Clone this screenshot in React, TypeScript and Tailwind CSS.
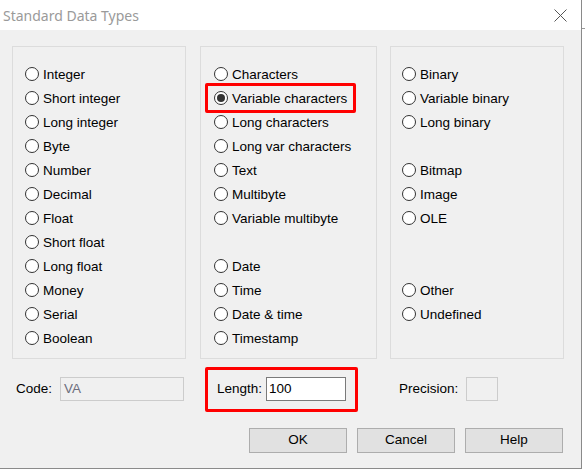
import React from "react";

type Item = { label: string; checked?: boolean; mark?: boolean } | null;

const col1: Item[] = [
  { label: "Integer" },
  { label: "Short integer" },
  { label: "Long integer" },
  { label: "Byte" },
  { label: "Number" },
  { label: "Decimal" },
  { label: "Float" },
  { label: "Short float" },
  { label: "Long float" },
  { label: "Money" },
  { label: "Serial" },
  { label: "Boolean" },
];

const col2: Item[] = [
  { label: "Characters" },
  { label: "Variable characters", checked: true, mark: true },
  { label: "Long characters" },
  { label: "Long var characters" },
  { label: "Text" },
  { label: "Multibyte" },
  { label: "Variable multibyte" },
  null,
  { label: "Date" },
  { label: "Time" },
  { label: "Date & time" },
  { label: "Timestamp" },
];

const col3: Item[] = [
  { label: "Binary" },
  { label: "Variable binary" },
  { label: "Long binary" },
  null,
  { label: "Bitmap" },
  { label: "Image" },
  { label: "OLE" },
  null,
  null,
  { label: "Other" },
  { label: "Undefined" },
];

function Radio({ item }: { item: Item }) {
  if (!item) return <div className="h-[24px]" />;
  return (
    <div className="relative flex items-center h-[24px]">
      {item.mark && (
        <div className="absolute left-[-9px] top-[-3px] w-[151px] h-[30px] border-[3px] border-[#ff0000] rounded-[2px]" />
      )}
      <span className="w-[14px] h-[14px] rounded-full border border-[#333333] bg-white flex items-center justify-center shrink-0">
        {item.checked && <span className="w-[8px] h-[8px] rounded-full bg-[#333333]" />}
      </span>
      <span className="ml-[4px] whitespace-nowrap leading-[16px] pt-[1px]">{item.label}</span>
    </div>
  );
}

function Group({ items, w, pl }: { items: Item[]; w: string; pl: string }) {
  return (
    <div className={`${w} ${pl} h-[313px] border border-[#dcdcdc] pt-[15px] flex flex-col`}>
      {items.map((it, i) => (
        <Radio key={i} item={it} />
      ))}
    </div>
  );
}

export default function App() {
  return (
    <div
      className="w-[585px] h-[473px] bg-white flex text-[13.5px] text-black overflow-hidden"
      style={{ fontFamily: '"Liberation Sans", Arial, sans-serif' }}
    >
      <div className="w-[582px] h-[469px] flex flex-col border-r border-b border-[#8a8a8a]">
        <div className="h-[30px] bg-white flex items-center justify-between shrink-0">
          <span
            className="ml-[3px] text-[14px] text-[#9a9a9a]"
            style={{ fontFamily: '"Noto Sans", "Open Sans", sans-serif' }}
          >
            Standard Data Types
          </span>
          <svg width="13" height="13" viewBox="0 0 13 13" className="mr-[14px]">
            <path d="M0.5 0.5 L12.5 12.5 M12.5 0.5 L0.5 12.5" stroke="#555" strokeWidth="1" fill="none" />
          </svg>
        </div>
        <div className="flex-1 bg-[#f0f0f0] px-[12px] pt-[16px] flex flex-col">
          <div className="flex">
            <Group items={col1} w="w-[174px]" pl="pl-[12px]" />
            <div className="ml-[14px]">
              <Group items={col2} w="w-[177px]" pl="pl-[13px]" />
            </div>
            <div className="ml-[13px]">
              <Group items={col3} w="w-[174px]" pl="pl-[11px]" />
            </div>
          </div>
          <div className="flex items-center mt-[18px] h-[24px]">
            <span className="ml-[4px] w-[44px]">Code:</span>
            <div className="w-[124px] h-[24px] border border-[#cccccc] bg-[#f0f0f0] flex items-center pl-[3px] text-[#6d6d7d]">
              VA
            </div>
            <div className="relative ml-[33px] flex items-center">
              <div className="absolute left-[-12px] top-[-10px] w-[153px] h-[45px] border-[3px] border-[#ff0000] rounded-[2px]" />
              <span className="w-[49px]">Length:</span>
              <div className="w-[80px] h-[24px] border border-[#7a7a7a] bg-white flex items-center pl-[2px]">
                100
              </div>
            </div>
            <span className="ml-[53px] w-[67px]">Precision:</span>
            <div className="w-[32px] h-[24px] border border-[#cccccc] bg-[#f0f0f0]" />
          </div>
          <div className="flex justify-end mt-[27px] gap-[10px] pr-[6px]">
            {["OK", "Cancel", "Help"].map((b) => (
              <div
                key={b}
                className="w-[98px] h-[25px] border border-[#adadad] bg-[#e1e1e1] flex items-center justify-center"
              >
                {b}
              </div>
            ))}
          </div>
        </div>
      </div>
      <div className="flex-1 bg-white flex flex-col">
        <div className="h-[28px]" />
        <div className="h-[1px] bg-[#9a9a9a]" />
      </div>
    </div>
  );
}
